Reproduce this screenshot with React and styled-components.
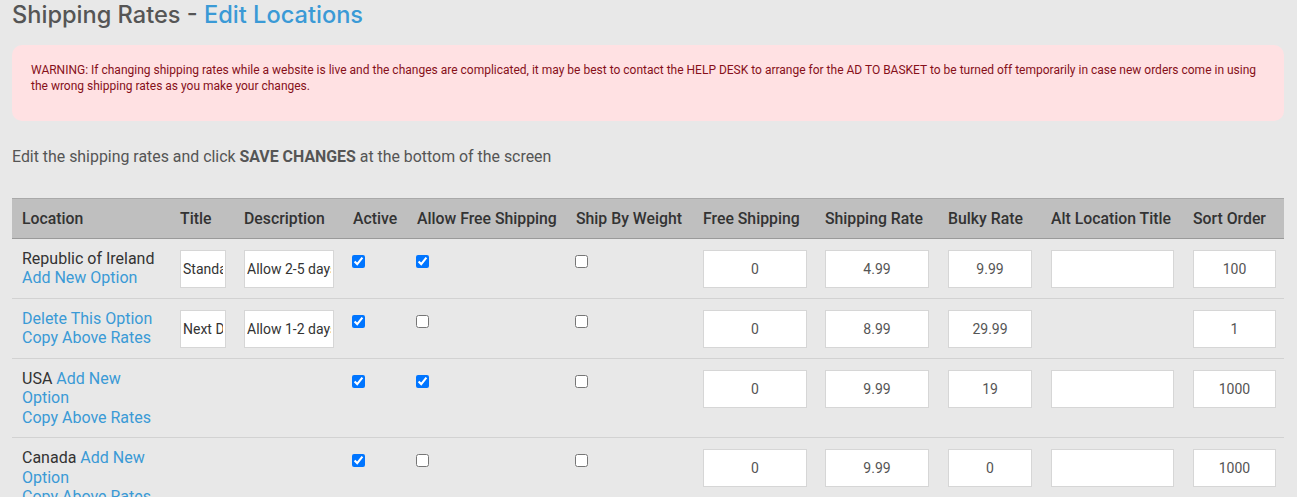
import React from "react";
import styled, { createGlobalStyle } from "styled-components";

const GlobalStyle = createGlobalStyle`
  html, body {
    margin: 0;
    padding: 0;
    background: #e8e8e8;
  }
  body {
    font-family: Roboto, "Liberation Sans", sans-serif;
    color: #555;
  }
`;

const rows = [
  {
    id: 1,
    location: "Republic of Ireland",
    links: [{ label: "Add New Option", newLine: true }],
    title: "Standard",
    description: "Allow 2-5 days",
    active: true,
    allowFree: true,
    byWeight: false,
    freeShipping: "0",
    rate: "4.99",
    bulky: "9.99",
    showAlt: true,
    sort: "100",
  },
  {
    id: 2,
    location: "",
    links: [
      { label: "Delete This Option", newLine: false },
      { label: "Copy Above Rates", newLine: true },
    ],
    title: "Next Day",
    description: "Allow 1-2 days",
    active: true,
    allowFree: false,
    byWeight: false,
    freeShipping: "0",
    rate: "8.99",
    bulky: "29.99",
    showAlt: false,
    sort: "1",
  },
  {
    id: 3,
    location: "USA",
    links: [
      { label: "Add New Option", newLine: false },
      { label: "Copy Above Rates", newLine: true },
    ],
    title: null,
    description: null,
    active: true,
    allowFree: true,
    byWeight: false,
    freeShipping: "0",
    rate: "9.99",
    bulky: "19",
    showAlt: true,
    sort: "1000",
  },
  {
    id: 4,
    location: "Canada",
    links: [
      { label: "Add New Option", newLine: false },
      { label: "Copy Above Rates", newLine: true },
    ],
    title: null,
    description: null,
    active: true,
    allowFree: false,
    byWeight: false,
    freeShipping: "0",
    rate: "9.99",
    bulky: "0",
    showAlt: true,
    sort: "1000",
  },
];

const columns = [
  ["Location", 158],
  ["Title", 64],
  ["Description", 109],
  ["Active", 64],
  ["Allow Free Shipping", 159],
  ["Ship By Weight", 127],
  ["Free Shipping", 122],
  ["Shipping Rate", 123],
  ["Bulky Rate", 103],
  ["Alt Location Title", 142],
  ["Sort Order", 101],
];

const App = () => {
  return (
    <Page>
      <GlobalStyle />
      <Heading>
        Shipping Rates - <HeadingLink>Edit Locations</HeadingLink>
      </Heading>

      <Warning>
        WARNING: If changing shipping rates while a website is live and the
        changes are complicated, it may be best to contact the HELP DESK to
        arrange for the AD TO BASKET to be turned off temporarily in case new
        orders come in using the wrong shipping rates as you make your changes.
      </Warning>

      <Intro>
        Edit the shipping rates and click <strong>SAVE CHANGES</strong> at the
        bottom of the screen
      </Intro>

      <Table>
        <colgroup>
          {columns.map(([name, w]) => (
            <col key={name} style={{ width: w }} />
          ))}
        </colgroup>
        <thead>
          <tr>
            {columns.map(([name]) => (
              <Th key={name}>{name}</Th>
            ))}
          </tr>
        </thead>
        <tbody>
          {rows.map((row) => (
            <Tr key={row.id}>
              <Td>
                {row.location && <span>{row.location} </span>}
                {row.links.map((link) => (
                  <React.Fragment key={link.label}>
                    {link.newLine && <br />}
                    <Link href="#">{link.label}</Link>
                  </React.Fragment>
                ))}
              </Td>
              <Td>
                {row.title !== null && (
                  <TextInput defaultValue={row.title} $w={46} />
                )}
              </Td>
              <Td>
                {row.description !== null && (
                  <TextInput defaultValue={row.description} $w={90} />
                )}
              </Td>
              <Td>
                <Check type="checkbox" defaultChecked={row.active} />
              </Td>
              <Td>
                <Check type="checkbox" defaultChecked={row.allowFree} />
              </Td>
              <Td>
                <Check type="checkbox" defaultChecked={row.byWeight} />
              </Td>
              <Td>
                <NumInput defaultValue={row.freeShipping} $w={104} />
              </Td>
              <Td>
                <NumInput defaultValue={row.rate} $w={104} />
              </Td>
              <Td>
                <NumInput defaultValue={row.bulky} $w={84} />
              </Td>
              <Td>
                {row.showAlt && <NumInput defaultValue="" $w={123} />}
              </Td>
              <Td>
                <NumInput defaultValue={row.sort} $w={83} />
              </Td>
            </Tr>
          ))}
        </tbody>
      </Table>
    </Page>
  );
};

export default App;

const Page = styled.div`
  padding: 0 13px 0 12px;
`;

const Heading = styled.h1`
  margin: 0;
  font-family: Inter, Roboto, sans-serif;
  font-size: 23.6px;
  font-weight: 500;
  line-height: 30px;
  color: #555;
`;

const HeadingLink = styled.span`
  color: #3a9ad6;
`;

const Warning = styled.div`
  margin-top: 15px;
  padding: 17px 19px 27px;
  background: #ffe1e3;
  border-radius: 10px;
  font-size: 12px;
  line-height: 16px;
  color: #86101a;
`;

const Intro = styled.p`
  margin: 26px 0 0;
  font-size: 15.9px;
  line-height: 20px;
  color: #555;

  strong {
    font-weight: 700;
  }
`;

const Table = styled.table`
  margin-top: 31px;
  width: 100%;
  border-collapse: collapse;
  table-layout: fixed;
`;

const Th = styled.th`
  height: 39px;
  padding: 0 10px;
  background: #bfbfbf;
  border-top: 1px solid #a9a9a9;
  border-bottom: 1px solid #9a9a9a;
  text-align: left;
  font-size: 15.8px;
  font-weight: 500;
  color: #333;
  white-space: nowrap;
`;

const Tr = styled.tr`
  border-bottom: 1px solid #d2d2d2;
`;

const Td = styled.td`
  padding: 10px 10px;
  vertical-align: top;
  font-size: 16px;
  line-height: 19.4px;
  color: #333;
`;

const Link = styled.a`
  color: #3a9ad6;
  text-decoration: none;
`;

const TextInput = styled.input`
  display: block;
  box-sizing: border-box;
  width: ${(p) => p.$w}px;
  height: 38px;
  margin: 1px 0 0;
  padding: 0 2px;
  border: 1px solid #d6d6d6;
  background: #fff;
  font-family: Roboto, sans-serif;
  font-size: 14px;
  color: #333;
  outline: none;
`;

const NumInput = styled(TextInput)`
  text-align: center;
  color: #555;
`;

const Check = styled.input`
  display: block;
  width: 13px;
  height: 13px;
  margin: 6px 0 0 -1px;
`;
